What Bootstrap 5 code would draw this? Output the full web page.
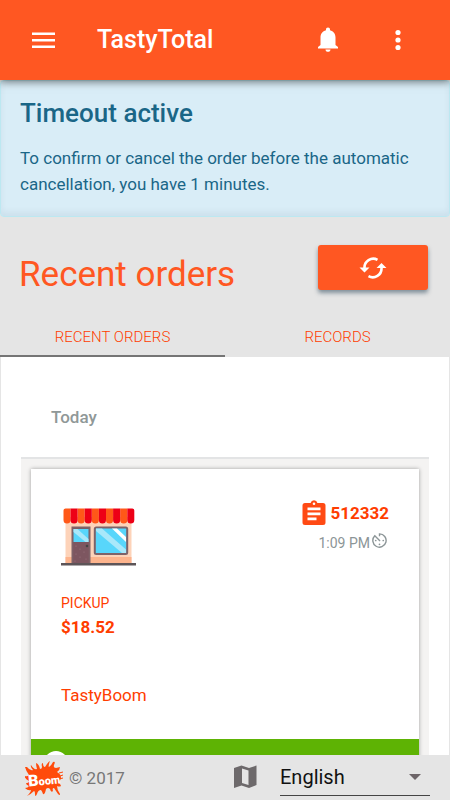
<!DOCTYPE html>
<html lang="en">
<head>
<meta charset="utf-8">
<meta name="viewport" content="width=device-width, initial-scale=1">
<title>TastyTotal</title>
<link href="https://cdn.jsdelivr.net/npm/bootstrap@5.3.0/dist/css/bootstrap.min.css" rel="stylesheet">
<style>
:root { --brand: #ff5722; --link: #ff3d00; --panel: #e5e5e5; }
body { font-family: Roboto, "Liberation Sans", sans-serif; background: var(--panel); }
svg { display: block; flex: none; }
.app-bar { height: 80px; background: var(--brand); padding: 0 48px 0 27px; box-shadow: 0 2px 8px rgba(0,0,0,.5); z-index: 2; }
.app-title { font-size: 25px; font-weight: 500; line-height: 32px; margin-left: 37px; }
.btn-bell { margin-right: 51px; }
.notice { background: #d9edf7; border: 1px solid #bce8f1; border-radius: 4px; color: #1a6687; padding: 16px 19px 19px; box-shadow: inset 0 -4px 6px rgba(0,40,70,.06); }
.notice h2 { font-size: 26px; font-weight: 500; line-height: 32px; margin-bottom: 16px; }
.notice p { font-size: 17px; line-height: 26px; }
.page-head { padding: 28px 22px 0 19px; }
.page-head h1 { font-size: 35px; font-weight: 400; line-height: 60px; color: var(--brand); }
.btn-refresh { width: 110px; height: 45px; border-radius: 3px; background: var(--brand) !important; box-shadow: 0 3px 4px rgba(30,60,80,.5); }
.order-tabs .nav-link { font-size: 15px; font-weight: 300; line-height: 22px; color: var(--link); border: 0; border-bottom: 2px solid transparent; border-radius: 0; padding: 21px 0 7px; }
.order-tabs .nav-link.active { color: var(--link); background: none; border-color: #757575; }
.orders { margin: 0 1px; padding: 0 20px; }
.day-name { font-size: 17px; font-weight: 500; line-height: 24px; color: #909898; padding: 48px 30px 28px; margin: 0; }
.day-list { background: #f4f3f2; border-top: 2px solid #e3e4e5; padding: 10px; }
.order-card { border-radius: 0; border: 0; box-shadow: 0 0 4px rgba(0,0,0,.35); }
.order-body { padding: 30px 30px 32px; }
.order-id { font-size: 17px; font-weight: 700; line-height: 28px; color: var(--link); }
.order-time { font-size: 14px; line-height: 20px; padding: 6px 2px 0 0; color: #8c9597; }
.order-time svg { margin-left: 2px; }
.order-kind { font-size: 14px; line-height: 20px; margin-top: 26px; color: var(--link); }
.order-price { font-size: 17px; font-weight: 700; line-height: 28px; color: var(--link); }
.order-shop { font-size: 17px; line-height: 24px; margin-top: 42px; color: var(--link); }
.shop-art { margin-top: 8px; }
.order-state { background: #5eb304; padding: 12px 13px; }
.state-dot { width: 24px; height: 24px; }
.foot-bar { height: 45px; background: var(--panel); padding: 0 20px 0 25px; z-index: 2; }
.foot-bar small { font-size: 17px; line-height: 24px; color: #777; margin-left: 6px; }
.map-link { margin-right: 20px; }
.lang { width: 150px; height: 39px; }
.lang select { height: 38px; padding: 0 24px 0 0; font-size: 20px; line-height: 28px; color: #111; background: none; border: 0; border-bottom: 1px solid #444; border-radius: 0; }
.lang svg { right: 9px; top: 16px; }
</style>
</head>
<body>
<div class="vh-100 d-flex flex-column overflow-hidden">
  <header class="app-bar navbar flex-nowrap flex-shrink-0 position-relative text-white">
    <button class="btn p-0 border-0" type="button" aria-label="Menu">
      <svg width="33" height="24" viewBox="0 0 33 24" fill="#fff"><path d="M5 4.500h23V7H5zM5 11h23v2.500H5zM5 17.500h23V20H5z"/></svg>
    </button>
    <span class="app-title me-auto">TastyTotal</span>
    <button class="btn btn-bell p-0 border-0" type="button" aria-label="Notifications">
      <svg width="30" height="30" viewBox="0 0 30 30" fill="#fff"><path d="M15 2.500c-1.300 0-2 .9-2 2v.8C9.500 6.200 7.500 9 7.500 12.500V20l-2.500 2v1.500h20V22l-2.500-2v-7.500c0-3.500-2-6.300-5.500-7.200v-.8c0-1.100-.7-2-2-2zM12.500 24.500h5c0 1.400-1.100 2.300-2.500 2.300s-2.500-.9-2.500-2.300z"/></svg>
    </button>
    <button class="btn p-0 border-0" type="button" aria-label="More">
      <svg width="8" height="24" viewBox="0 0 8 24" fill="#fff"><circle cx="4" cy="4.500" r="2.600"/><circle cx="4" cy="12" r="2.600"/><circle cx="4" cy="19.500" r="2.600"/></svg>
    </button>
  </header>

  <main class="flex-fill overflow-hidden">
    <section class="notice" role="status">
      <h2>Timeout active</h2>
      <p class="mb-0">To confirm or cancel the order before the automatic cancellation, you have 1 minutes.</p>
    </section>

    <div class="page-head d-flex justify-content-between align-items-start">
      <h1 class="mb-0">Recent orders</h1>
      <button class="btn btn-refresh p-0 border-0 d-flex align-items-center justify-content-center" type="button" aria-label="Refresh">
        <svg width="28" height="24" viewBox="0 0 28 24"><g fill="none" stroke="#fff" stroke-width="2.600"><path d="M18.500 3.800A8.800 8.800 0 0 0 5.500 12"/><path d="M9.500 20.200A8.800 8.800 0 0 0 22.500 12"/></g><path fill="#fff" d="M.5 11.500h10L5.500 16.500zM17.500 12h10l-5-5z"/></svg>
      </button>
    </div>

    <ul class="order-tabs nav nav-pills nav-justified" role="tablist">
      <li class="nav-item" role="presentation"><button class="nav-link active" type="button" role="tab" aria-selected="true">RECENT ORDERS</button></li>
      <li class="nav-item" role="presentation"><button class="nav-link" type="button" role="tab" aria-selected="false">RECORDS</button></li>
    </ul>

    <section class="orders bg-white">
      <h2 class="day-name">Today</h2>
      <div class="day-list">
        <article class="order-card card">
          <div class="order-body">
            <div class="d-flex justify-content-between align-items-start">
              <svg class="shop-art" width="75" height="60" viewBox="0 0 75 60" role="img" aria-label="Shop">
                <path fill="#fdd3b9" d="M4.500 10h66v46h-66z"/><path fill="#fdb48d" d="M4.500 50h66v6h-66z"/>
                <path fill="#7d5660" d="M11 20h18v37H11z"/>
                <path fill="#7f6268" d="M10.500 19.500h19V57h-1.800V21.500H12.300V57h-1.800z"/>
                <path fill="#58d6fb" d="M12.500 22h15v13h-15z"/><path fill="#a9e8fa" d="M12.500 22h4l11 10v3h-3l-12-10z"/>
                <g fill="#a27a83"><circle cx="15" cy="39" r=".5"/><circle cx="19" cy="42" r=".5"/><circle cx="23" cy="45" r=".5"/><circle cx="15" cy="47" r=".5"/><circle cx="19" cy="50" r=".5"/><circle cx="25" cy="52" r=".5"/><circle cx="14" cy="54" r=".5"/></g>
                <circle cx="26" cy="39" r="1.300" fill="#444"/>
                <rect x="33.800" y="20.500" width="32.400" height="26.500" rx="1.500" fill="#58d6fb" stroke="#7f6268" stroke-width="2"/>
                <path fill="#a9e8fa" d="M35 21.500h6l24 21V46h-4L35 24z"/><path fill="#fff" d="M51 21.500h5l9 8.500v5z"/>
                <g fill="#ff5818"><path d="M2.500 3.500a2 2 0 0 1 2-2h5V13a3.500 3.500 0 0 1-7 0zM16.600 1.500h7.100V13a3.500 3.500 0 0 1-7.100 0zM30.800 1.500h7.100V13a3.500 3.500 0 0 1-7.100 0zM45 1.500h7.100V13a3.500 3.500 0 0 1-7.100 0zM59.200 1.500h7.100V13a3.500 3.500 0 0 1-7.100 0z"/></g>
                <g fill="#ed0016"><path d="M9.500 1.500h7.100V13a3.500 3.500 0 0 1-7.100 0zM23.700 1.500h7.100V13a3.500 3.500 0 0 1-7.100 0zM37.900 1.500H45V13a3.500 3.500 0 0 1-7.100 0zM52.100 1.500h7.100V13a3.500 3.500 0 0 1-7.100 0zM66.300 1.500h5a2 2 0 0 1 2 2V13a3.500 3.500 0 0 1-7 0z"/></g>
                <path fill="#5d5558" d="M0 56h75v2.500H0z"/>
              </svg>
              <div>
                <div class="order-id d-flex align-items-center justify-content-end gap-1">
                  <svg width="24" height="26" viewBox="0 0 24 26"><path fill="#ff4a14" fill-rule="evenodd" d="M3 3h5.600a3.500 3.500 0 0 1 6.800 0H21a2.500 2.500 0 0 1 2.500 2.500v17A2.500 2.500 0 0 1 21 25H3A2.500 2.500 0 0 1 .5 22.500v-17A2.500 2.500 0 0 1 3 3zm9-.5a1.300 1.300 0 1 0 0 2.600 1.300 1.300 0 0 0 0-2.600zM5.500 7.500v2.700h13V7.500zm0 5v2.700h13v-2.700zm0 5v2.700h9v-2.700z"/></svg>
                  <span>512332</span>
                </div>
                <div class="order-time d-flex justify-content-end">
                  <span>1:09 PM</span>
                  <svg width="15" height="15" viewBox="0 0 14 14" fill="none" stroke="#8c9597" stroke-width="1.300"><path d="M7 3V.8A6.200 6.200 0 1 1 2.600 2.600L7.500 7.500"/><g stroke="none" fill="#8c9597"><circle cx="3.500" cy="7" r=".8"/><circle cx="10.500" cy="7" r=".8"/><circle cx="7" cy="10.600" r=".8"/></g></svg>
                </div>
              </div>
            </div>
            <div class="order-kind">PICKUP</div>
            <div class="order-price">$18.52</div>
            <div class="order-shop">TastyBoom</div>
          </div>
          <div class="order-state"><div class="state-dot bg-white rounded-circle"></div></div>
        </article>
      </div>
    </section>
  </main>

  <footer class="foot-bar d-flex align-items-center flex-shrink-0 position-relative">
    <svg width="38" height="38" viewBox="0 0 38 38" role="img" aria-label="Boom">
      <path fill="#ff4b0b" d="M2 8q3 4 6 3-3-3-2-5 3 5 6 4-1-4-1-6 3 1 4 6 2 0 2-2-1-4 1-4 0 4 2 4 3-5 5-6-2 5-1 6 2-1 4-5 3-1 1 3-1 3 2 3l4-1q0 3-3 5 4 2 4 6l-2 5q2 2 2 3-2 1-4 0 0 4 3 8 0 2-2 0l-4-6q-2 0-1 3-2 2-3-2-2-2-4 0-1 6-3 5-1-3-2-4-3 0-4 4-2 4-2 0 0-3-1-3-4 4-7 5 4-4 4-6-3 1-6-2 3 0 4-2-3-1-3-3 3 0 3-2-5-3-4-5 2 1 4-1-3-4-4-8z"/>
      <text x="3" y="26" transform="rotate(-6 18 20)" font-family="Roboto, sans-serif" font-weight="900" fill="#fff"><tspan font-size="16">B</tspan><tspan font-size="11">oom</tspan></text>
      <path d="M34 14l4-1M35 17l3-1M34 20l4-1" stroke="#ff4b0b"/>
    </svg>
    <small class="me-auto">© 2017</small>
    <a href="#" class="map-link" aria-label="Map">
      <svg width="30" height="28" viewBox="0 0 30 28"><path fill="#6d696b" fill-rule="evenodd" d="M4 4l7.500-2.500L19 4l7.500-2.500V21L19 24l-7.500-2.500L4 24zm8 .5v14.500l6.500 2V6.500z"/></svg>
    </a>
    <div class="lang position-relative">
      <select class="form-select shadow-none" aria-label="Language"><option>English</option></select>
      <svg class="position-absolute pe-none" width="12" height="6" viewBox="0 0 12 6"><path fill="#6d6568" d="M0 0h12L6 6z"/></svg>
    </div>
  </footer>
</div>
<script src="https://cdn.jsdelivr.net/npm/bootstrap@5.3.0/dist/js/bootstrap.bundle.min.js"></script>
</body>
</html>
